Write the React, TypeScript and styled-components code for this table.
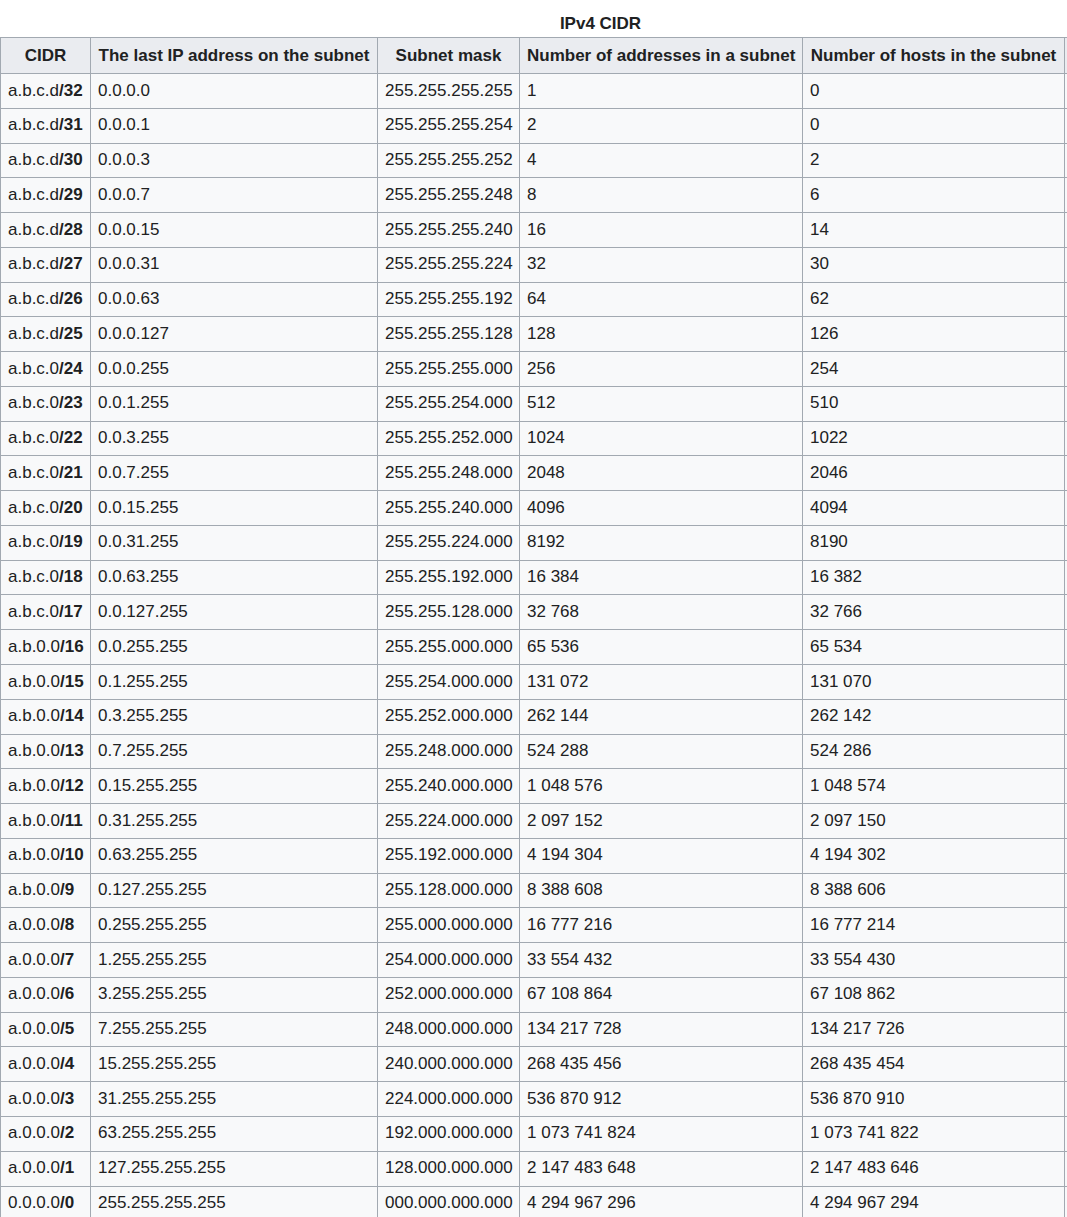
import React from 'react'
import styled, { createGlobalStyle } from 'styled-components'

const GlobalStyle = createGlobalStyle`
  html, body {
    margin: 0;
    padding: 0;
    background: #ffffff;
    overflow: hidden;
  }
  body {
    font-family: 'Liberation Sans', Arial, sans-serif;
    color: #202122;
  }
`

interface Row {
  prefix: number
  base: string
  last: string
  mask: string
  addresses: string
  hosts: string
}

const columns = [
  { title: 'CIDR', width: 90 },
  { title: 'The last IP address on the subnet', width: 287 },
  { title: 'Subnet mask', width: 142 },
  { title: 'Number of addresses in a subnet', width: 283 },
  { title: 'Number of hosts in the subnet', width: 262 },
  { title: '', width: 136 }
]

function octets(value: number) {
  return [24, 16, 8, 0].map((shift) => Math.floor(value / 2 ** shift) % 256)
}

function groupDigits(value: number) {
  const text = String(value)
  if (text.length < 5) return text
  return text.replace(/\B(?=(\d{3})+(?!\d))/g, ' ')
}

function baseFor(prefix: number) {
  if (prefix >= 25) return 'a.b.c.d'
  if (prefix >= 17) return 'a.b.c.0'
  if (prefix >= 9) return 'a.b.0.0'
  if (prefix >= 1) return 'a.0.0.0'
  return '0.0.0.0'
}

const rows: Row[] = Array.from({ length: 33 }, (_, i) => {
  const prefix = 32 - i
  const size = 2 ** (32 - prefix)
  const wildcard = size - 1
  const mask = 2 ** 32 - size
  return {
    prefix,
    base: baseFor(prefix),
    last: octets(wildcard).join('.'),
    mask: octets(mask)
      .map((o) => String(o).padStart(3, '0'))
      .join('.'),
    addresses: groupDigits(size),
    hosts: prefix >= 31 ? '0' : groupDigits(size - 2)
  }
})

export default function App() {
  return (
    <>
      <GlobalStyle />
      <Viewport>
        <WikiTable>
          <Caption>IPv4 CIDR</Caption>
          <colgroup>
            {columns.map((col, i) => (
              <col key={i} style={{ width: col.width }} />
            ))}
          </colgroup>
          <thead>
            <tr>
              {columns.map((col, i) => (
                <HeaderCell key={i}>{col.title}</HeaderCell>
              ))}
            </tr>
          </thead>
          <tbody>
            {rows.map((row) => (
              <tr key={row.prefix}>
                <Cell>
                  {row.base}
                  <strong>/{row.prefix}</strong>
                </Cell>
                <Cell>{row.last}</Cell>
                <Cell>{row.mask}</Cell>
                <Cell>{row.addresses}</Cell>
                <Cell>{row.hosts}</Cell>
                <Cell />
              </tr>
            ))}
          </tbody>
        </WikiTable>
      </Viewport>
    </>
  )
}

const Viewport = styled.div`
  width: 100vw;
  height: 100vh;
  overflow: hidden;
`

const WikiTable = styled.table`
  border-collapse: collapse;
  table-layout: fixed;
  width: 1200px;
  margin: 0;
  font-size: 17px;
  color: #202122;
  background: #f8f9fa;
  white-space: nowrap;
`

const Caption = styled.caption`
  font-weight: bold;
  text-align: center;
  padding-top: 10px;
  line-height: 27px;
  background: #ffffff;
`

const HeaderCell = styled.th`
  background: #eaecf0;
  border: 1px solid #a2a9b1;
  padding: 4px 7px;
  line-height: 27px;
  font-weight: bold;
  text-align: center;
  overflow: hidden;
`

const Cell = styled.td`
  border: 1px solid #a2a9b1;
  padding: 3.5px 7px;
  line-height: 26.76px;
  text-align: left;
  overflow: hidden;

  strong {
    font-weight: bold;
  }
`
